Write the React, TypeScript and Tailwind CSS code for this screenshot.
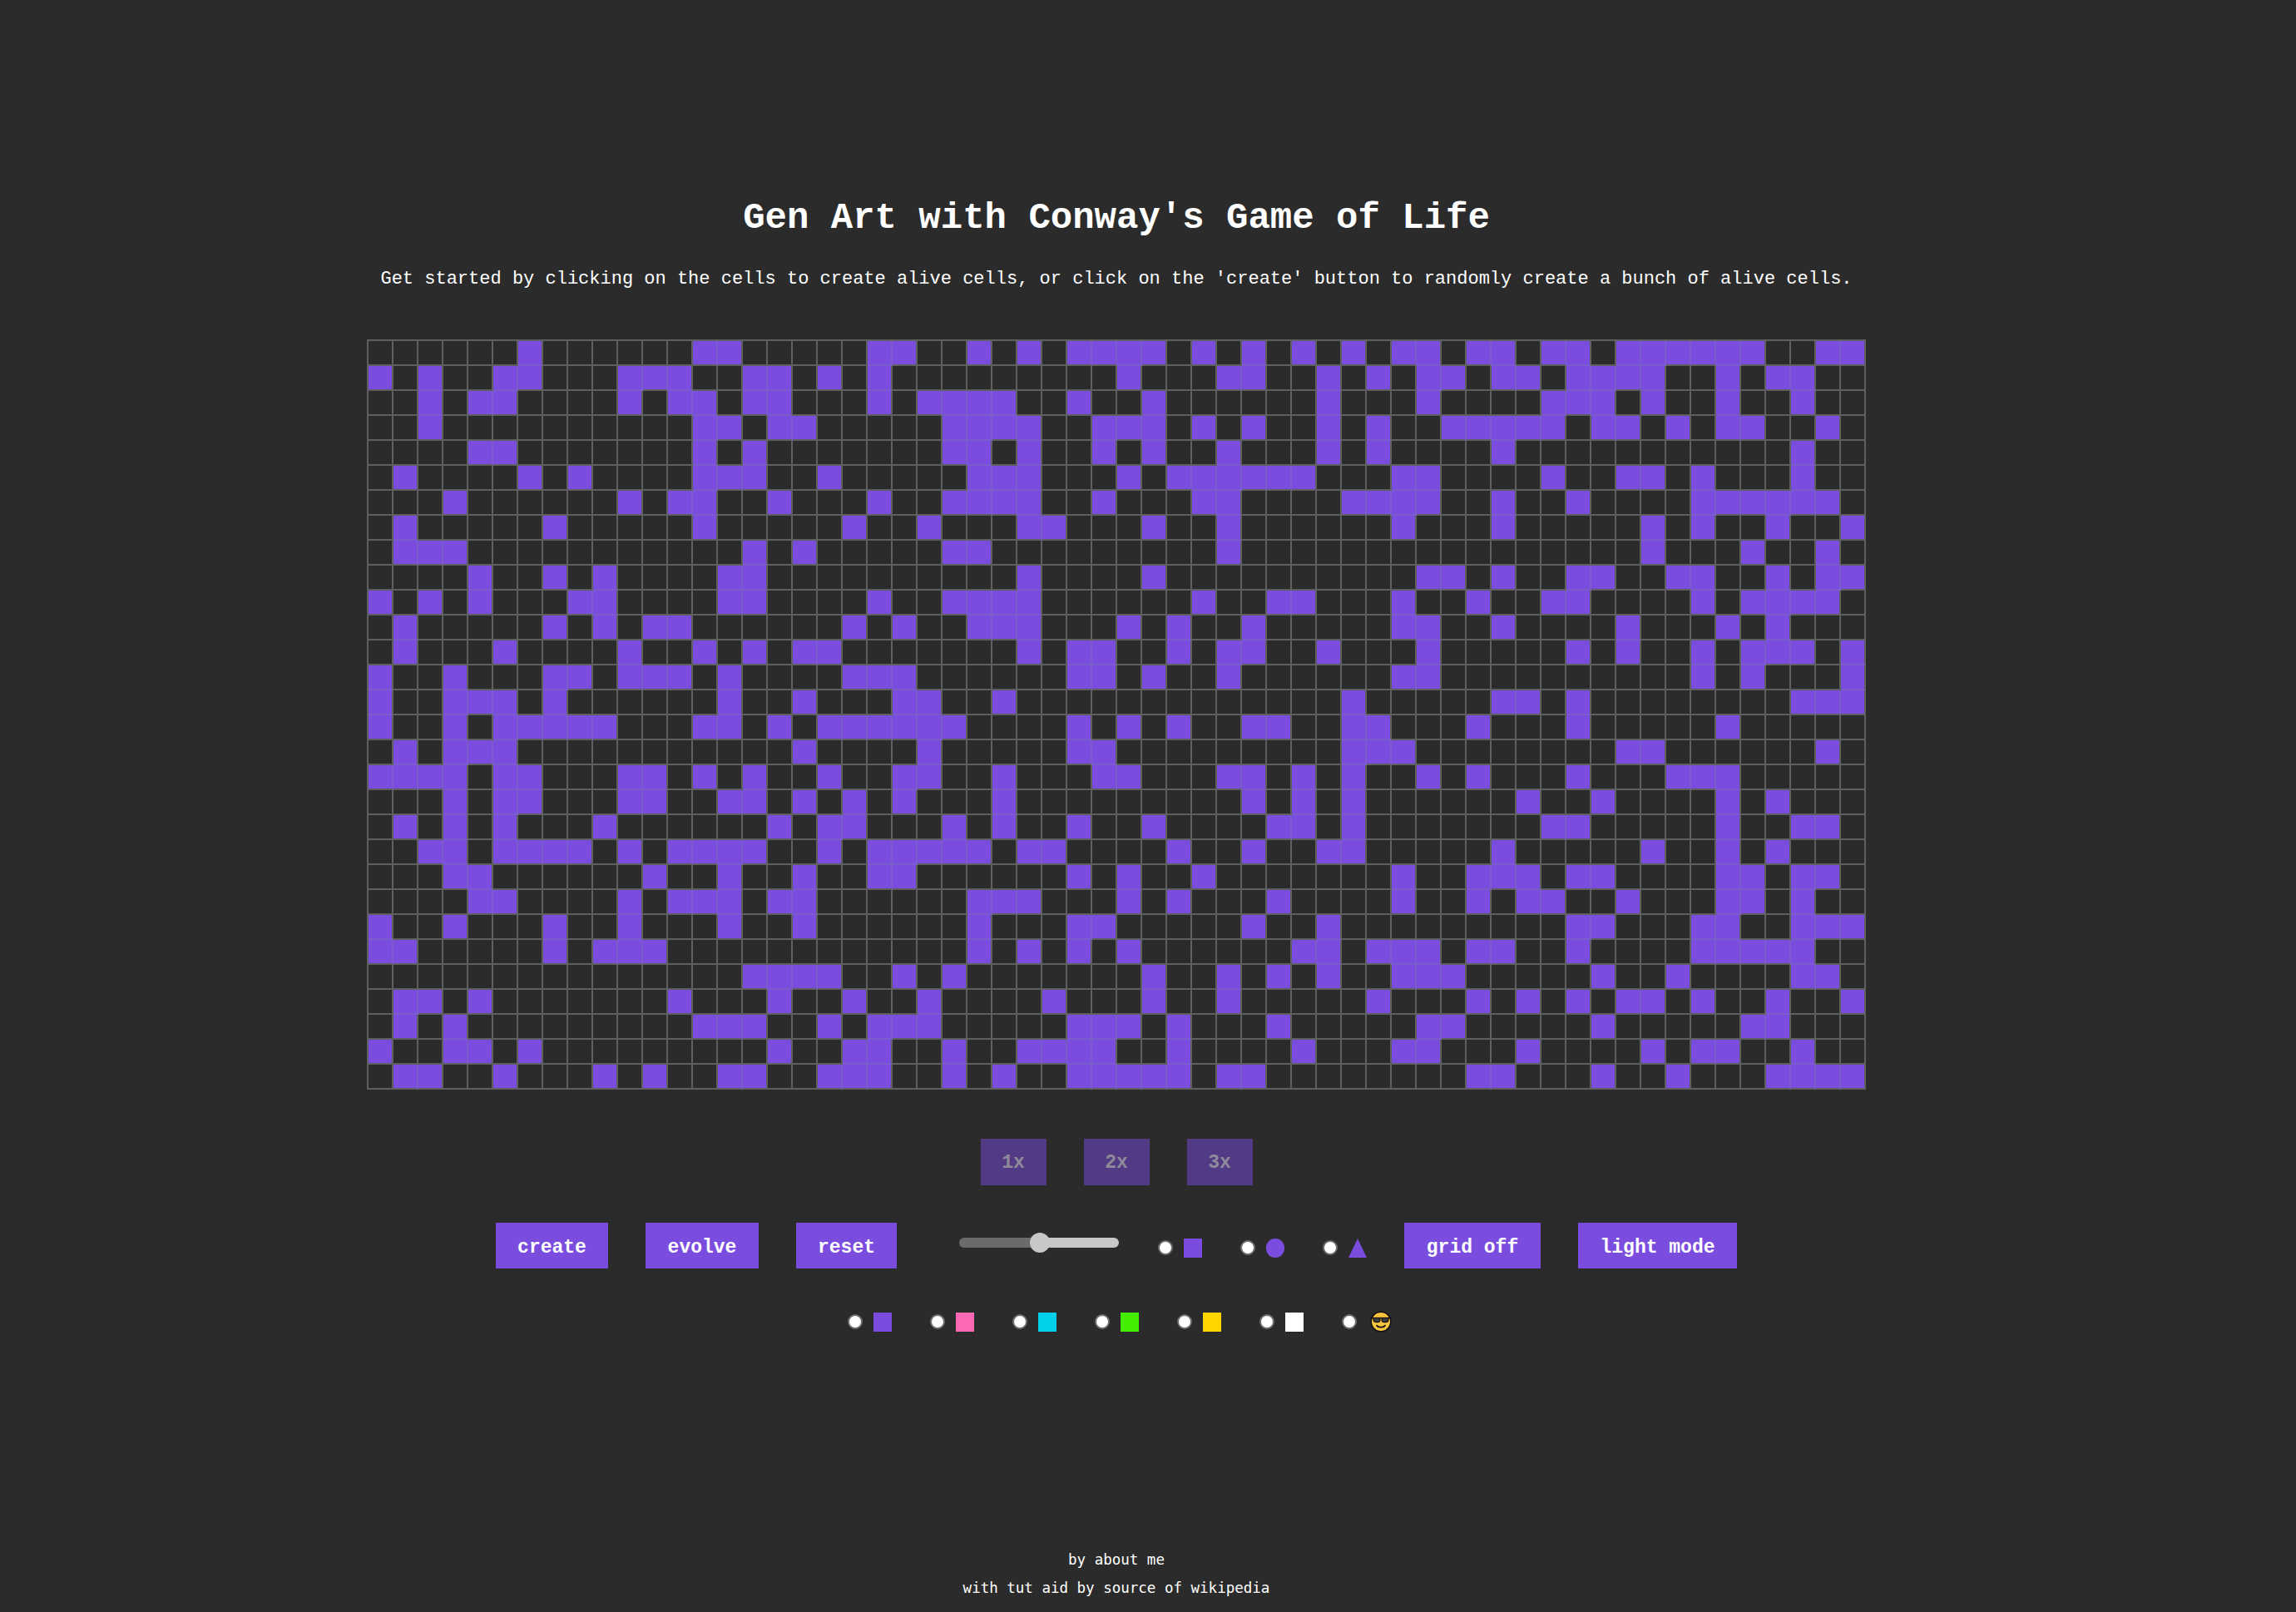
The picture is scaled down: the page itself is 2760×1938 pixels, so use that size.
import type { ReactNode } from "react";

const ROWS: number[][] = [
  [6,13,14,20,21,24,26,28,29,30,31,33,35,37,39,41,42,44,45,47,48,50,51,52,53,54,55,58,59],
  [0,2,5,6,10,11,12,15,16,18,20,30,34,35,38,40,42,43,45,46,48,49,50,51,54,56,57],
  [2,4,5,10,12,13,15,16,20,22,23,24,25,28,31,38,42,47,48,49,51,54,57],
  [2,13,14,16,17,23,24,25,26,29,30,31,33,35,38,40,43,44,45,46,47,49,50,52,54,55,58],
  [4,5,13,15,23,24,26,29,31,34,38,40,45,57],
  [1,6,8,13,14,15,18,24,25,26,30,32,33,34,35,36,37,41,42,47,50,51,53,57],
  [3,10,12,13,16,20,23,24,25,26,29,33,34,39,40,41,42,45,48,53,54,55,56,57,58],
  [1,7,13,19,22,26,27,31,34,41,45,51,53,56,59],
  [1,2,3,15,17,23,24,34,51,55,58],
  [4,7,9,14,15,26,31,42,43,45,48,49,52,53,56,58,59],
  [0,2,4,8,9,14,15,20,23,24,25,26,33,36,37,41,44,47,48,53,55,56,57,58],
  [1,7,9,11,12,19,21,24,25,26,30,32,35,41,42,45,50,54,56],
  [1,5,10,13,15,17,18,26,28,29,32,34,35,38,42,48,50,53,55,56,57,59],
  [0,3,7,8,10,11,12,14,19,20,21,28,29,31,34,41,42,53,55,59],
  [0,3,4,5,7,14,17,21,22,25,39,45,46,48,57,58,59],
  [0,3,5,6,7,8,9,13,14,16,18,19,20,21,22,23,28,30,32,35,36,39,40,44,48,54],
  [1,3,4,5,17,22,28,29,39,40,41,50,51,58],
  [0,1,2,3,5,6,10,11,13,15,18,21,22,25,29,30,34,35,37,39,42,44,48,52,53,54],
  [3,5,6,10,11,14,15,17,19,21,25,35,37,39,46,49,54,56],
  [1,3,5,9,16,18,19,23,25,28,31,36,37,39,47,48,54,57,58],
  [2,3,5,6,7,8,10,12,13,14,15,18,20,21,22,23,24,26,27,32,35,38,39,45,51,54,56],
  [3,4,11,14,17,20,21,28,30,33,41,44,45,46,48,49,54,55,57,58],
  [4,5,10,12,13,14,16,17,24,25,26,30,32,36,41,44,46,47,50,54,55,57],
  [0,3,7,10,14,17,24,28,29,35,38,48,49,53,54,57,58,59],
  [0,1,7,9,10,11,24,26,28,30,37,38,40,41,42,44,45,48,53,54,55,56,57],
  [15,16,17,18,21,23,31,34,36,38,41,42,43,49,52,57,58],
  [1,2,4,12,16,19,22,27,31,34,40,44,46,48,50,51,53,56,59],
  [1,3,13,14,15,18,20,21,22,28,29,30,32,36,42,43,49,55,56],
  [0,3,4,6,16,19,20,23,26,27,28,29,32,37,41,42,46,51,53,54,57],
  [1,2,5,9,11,14,15,18,19,20,23,25,28,29,30,31,32,34,35,44,45,49,52,56,57,58,59],
];

const MONO = "font-['Liberation_Mono',monospace]";
const BTN = `h-[55px] pt-[5px] bg-[#7b4ddf] text-white text-[23px] font-bold ${MONO}`;

function Cell({ on, right, below }: { on: boolean; right: boolean; below: boolean }) {
  return (
    <div
      className={`h-[30px] w-[30px] border-r-2 border-b-2 ${on ? "bg-[#7b4ddf]" : ""} ${
        right ? "border-r-[#7a5ccb]" : "border-r-[#5f5f5f]"
      } ${below ? "border-b-[#7a5ccb]" : "border-b-[#5f5f5f]"}`}
    />
  );
}

function Board() {
  return (
    <div className="grid grid-cols-[repeat(60,30px)] border-l-2 border-t-2 border-[#5f5f5f]">
      {ROWS.flatMap((row, r) =>
        Array.from({ length: 60 }, (_, c) => {
          const on = row.includes(c);
          return (
            <Cell
              key={`${r}-${c}`}
              on={on}
              right={on && row.includes(c + 1)}
              below={on && r < 29 && ROWS[r + 1].includes(c)}
            />
          );
        }),
      )}
    </div>
  );
}

function Radio({ name, children }: { name: string; children: ReactNode }) {
  return (
    <label className="flex h-[24px] w-[53px] items-center">
      <input
        type="radio"
        name={name}
        className="m-0 h-[18px] w-[18px] shrink-0 appearance-none rounded-full border-2 border-[#6f6f6f] bg-white"
      />
      <span className="ml-[13px] flex">{children}</span>
    </label>
  );
}

function Square({ color }: { color: string }) {
  return <span className={`block h-[23px] w-[22px] ${color}`} />;
}

function Emoji() {
  return (
    <svg viewBox="0 0 26 26" className="ml-[3px] h-[26px] w-[26px] max-w-none">
      <circle cx="13" cy="13" r="11.8" fill="#f7c440" stroke="#111" strokeWidth="1.6" />
      <path d="M1 8.500h24" stroke="#111" strokeWidth="1.4" />
      <path d="M4 8.500h8v2.800c0 1.400-1.200 2.300-3.800 2.300S4 12.700 4 11.300zM14 8.500h8v2.800c0 1.400-1.200 2.300-4 2.300s-4-.9-4-2.300z" fill="#3a3a3a" stroke="#111" strokeWidth="1.100" />
      <path d="M8 17.500c1.500 2.800 8.500 2.800 10 0" fill="none" stroke="#111" strokeWidth="1.600" strokeLinecap="round" />
    </svg>
  );
}

function Speed({ label }: { label: string }) {
  return (
    <button disabled className={`h-[56px] w-[79px] pt-[3px] bg-[#533a85] text-[#8f8a99] text-[23px] font-bold ${MONO}`}>
      {label}
    </button>
  );
}

export default function App() {
  return (
    <div className={`min-h-[1938px] bg-[#2b2b2b] text-white ${MONO}`}>
      <div className="flex h-[1938px] w-[2684px] flex-col items-center">
        <h1 className="mt-[236px] text-[44px] font-bold leading-[52px]">Gen Art with Conway's Game of Life</h1>
        <p className="mt-[32px] text-[22px] leading-[32px]">
          Get started by clicking on the cells to create alive cells, or click on the 'create' button to randomly create a bunch of alive cells.
        </p>
        <div className="mt-[56px]">
          <Board />
        </div>
        <div className="mt-[59px] flex gap-[45px]">
          <Speed label="1x" />
          <Speed label="2x" />
          <Speed label="3x" />
        </div>
        <div className="mt-[45px] flex items-center gap-[45px]">
          <button className={`${BTN} w-[135px]`}>create</button>
          <button className={`${BTN} w-[136px]`}>evolve</button>
          <button className={`${BTN} w-[121px]`}>reset</button>
          <div className="relative mb-[7px] ml-[30px] mr-[2px] flex h-[24px] w-[192px] items-center">
            <div className="h-[12px] w-[96px] rounded-l-full bg-[#6b6b6b]" />
            <div className="h-[12px] w-[96px] rounded-r-full bg-[#c8c8c8]" />
            <div className="absolute left-[85px] top-0 h-[24px] w-[24px] rounded-full bg-[#c8c8c8]" />
          </div>
          <div className="mt-[5px] flex gap-[46px]">
            <Radio name="shape"><Square color="bg-[#7b4ddf]" /></Radio>
            <Radio name="shape"><span className="block h-[23px] w-[22px] rounded-full bg-[#7b4ddf]" /></Radio>
            <Radio name="shape">
              <svg viewBox="0 0 22 23" className="h-[23px] w-[22px]"><path d="M11 0L22 23H0z" fill="#7b4ddf" /></svg>
            </Radio>
          </div>
          <button className={`${BTN} w-[164px]`}>grid off</button>
          <button className={`${BTN} w-[191px]`}>light mode</button>
        </div>
        <div className="mt-[52px] flex items-center gap-[46px]">
          <Radio name="color"><Square color="bg-[#7b4ddf]" /></Radio>
          <Radio name="color"><Square color="bg-[#ff69b4]" /></Radio>
          <Radio name="color"><Square color="bg-[#00d1e8]" /></Radio>
          <Radio name="color"><Square color="bg-[#44ee00]" /></Radio>
          <Radio name="color"><Square color="bg-[#ffd500]" /></Radio>
          <Radio name="color"><Square color="bg-white" /></Radio>
          <Radio name="color"><Emoji /></Radio>
        </div>
        <footer className="mt-auto pb-[12px] text-center font-['DejaVu_Sans_Mono',monospace] text-[17.5px] leading-[34px]">
          <p>by about me</p>
          <p>with tut aid by source of wikipedia</p>
        </footer>
      </div>
    </div>
  );
}
